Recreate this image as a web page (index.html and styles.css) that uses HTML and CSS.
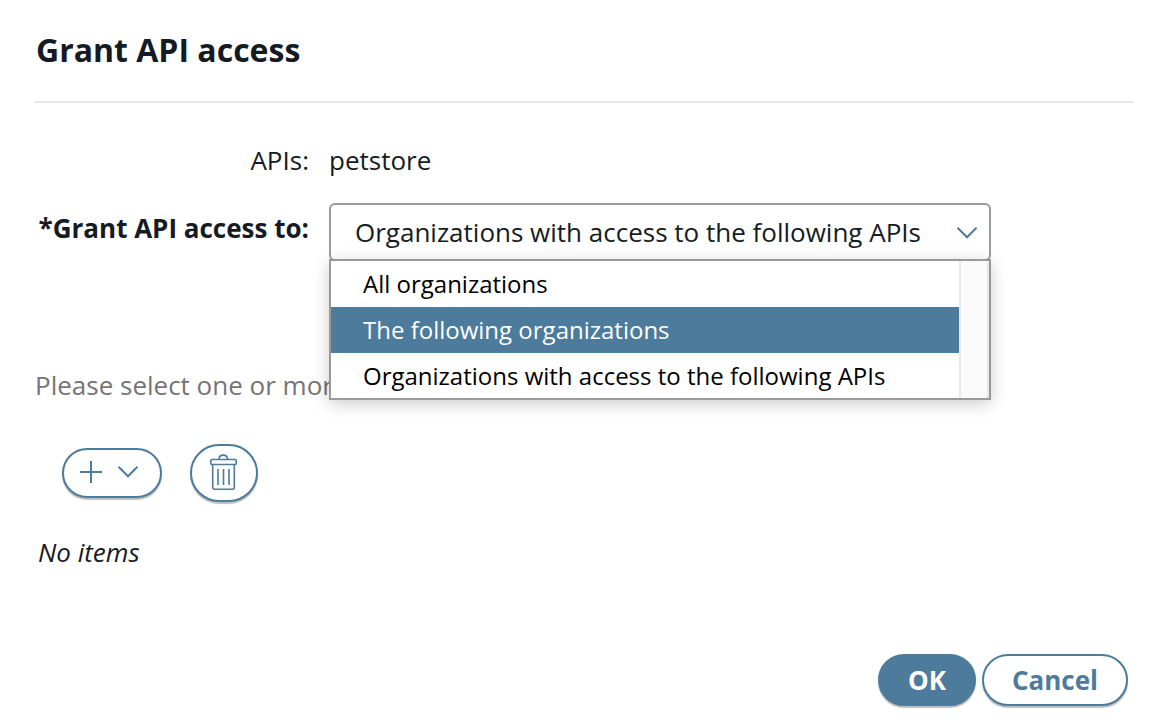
FILE: index.html
```html
<!DOCTYPE html>
<html lang="en">
<head>
<meta charset="utf-8">
<title>Grant API access</title>
<link rel="stylesheet" href="styles.css">
</head>
<body>
<main class="dialog">
  <header class="dialog-header">
    <h1 class="dialog-title">Grant API access</h1>
  </header>
  <form class="dialog-form">
    <div class="field">
      <span class="field-label">APIs:</span>
      <span class="field-value">petstore</span>
    </div>
    <div class="field field-access">
      <label class="field-label field-label-required" for="access">*Grant API access to:</label>
      <div class="select">
        <select class="select-control" id="access">
          <option>Organizations with access to the following APIs</option>
        </select>
        <svg class="select-arrow" width="22" height="14" viewBox="0 0 22 14" aria-hidden="true"><path d="M1.5 1.8 11 11.3 20.5 1.8"/></svg>
        <div class="menu">
          <ul class="menu-list" role="listbox" aria-label="Grant API access to">
            <li class="menu-item" role="option">All organizations</li>
            <li class="menu-item menu-item-active" role="option" aria-selected="true">The following organizations</li>
            <li class="menu-item" role="option">Organizations with access to the following APIs</li>
          </ul>
          <div class="menu-track"></div>
        </div>
      </div>
    </div>
    <p class="hint">Please select one or more</p>
    <div class="toolbar">
      <button class="tool tool-add" type="button" aria-label="Add">
        <svg width="22" height="22" viewBox="0 0 22 22"><path d="M11 0V22M0 11H22"/></svg>
        <svg width="22" height="14" viewBox="0 0 22 14"><path d="M1.5 1.8 11 11.3 20.5 1.8"/></svg>
      </button>
      <button class="tool tool-delete" type="button" aria-label="Delete">
        <svg class="trash" width="28" height="38" viewBox="0 0 28 38"><path d="M9 5.500C9-.3 17.500-.3 17.500 5.500"/><rect x=".8" y="5.500" width="25.400" height="5" rx="1"/><path d="M2.700 10.500V33.200a2 2 0 0 0 2 2h17.600a2 2 0 0 0 2-2V10.500M8 15v16M13.500 15v16M19 15v16"/></svg>
      </button>
    </div>
    <p class="empty">No items</p>
    <footer class="actions">
      <button class="button button-primary" type="submit">OK</button>
      <button class="button" type="button">Cancel</button>
    </footer>
  </form>
</main>
</body>
</html>
```
FILE: styles.css
```css
* {
  box-sizing: border-box;
}

body {
  margin: 0;
  background: #fff;
  color: #151b23;
  font: 26px/36px "Open Sans", sans-serif;
}

.dialog {
  padding: 28px 37px 14px 35px;
}

.dialog-header {
  padding: 0 1px 29px;
  border-bottom: 2px solid #e8e8e8;
}

.dialog-title {
  margin: 0;
  font-size: 32px;
  line-height: 44px;
  font-weight: 700;
}

.dialog-form {
  padding-top: 39px;
}

.field {
  display: grid;
  grid-template-columns: 274px minmax(0, 662px);
  column-gap: 20px;
}

.field-label {
  text-align: right;
}

.field-label-required {
  padding-top: 7px;
  font-weight: 700;
}

.field-access {
  margin-top: 25px;
}

.select {
  position: relative;
}

.select-control {
  display: block;
  appearance: none;
  width: 100%;
  height: 58px;
  padding: 0 44px 0 24px;
  border: 2px solid #999;
  border-radius: 6px;
  background: #fff;
  color: inherit;
  font: inherit;
}

.select-arrow {
  position: absolute;
  top: 23px;
  right: 13px;
  pointer-events: none;
}

svg {
  fill: none;
  stroke: #4d7b9c;
  stroke-width: 2;
}

.menu {
  position: absolute;
  z-index: 1;
  top: 56px;
  left: 0;
  right: 0;
  display: flex;
  height: 141px;
  border: 2px solid #999;
  background: #fff;
  box-shadow: 0 4px 16px rgba(0, 0, 0, 0.2);
}

.menu-list {
  flex: 1;
  margin: 0;
  padding: 0;
  list-style: none;
  color: #000;
  font-size: 24px;
  line-height: 46px;
}

.menu-item {
  padding: 0 32px;
}

.menu-item-active {
  background: #4d7b9c;
  color: #fff;
}

.menu-track {
  width: 30px;
  border: solid #e8e8e8;
  border-width: 0 2px;
  background: #fafafa;
}

.hint {
  margin: 106px 0 0;
  color: #757575;
}

.toolbar {
  display: flex;
  align-items: center;
  gap: 28px;
  margin: 41px 0 0 27px;
}

.tool {
  display: flex;
  align-items: center;
  justify-content: center;
  padding: 0;
  border: 2px solid #4d7b9c;
  border-radius: 29px;
  background: #fff;
  box-shadow: 0 2px 1px rgba(0, 0, 0, 0.25);
}

.tool-add {
  gap: 15px;
  width: 100px;
  height: 50px;
  padding: 0 6px 2px 0;
}

.tool-delete {
  width: 68px;
  height: 58px;
}

.trash {
  stroke-width: 1.6;
}

.empty {
  margin: 32px 0 0 3px;
  font-style: italic;
}

.actions {
  display: flex;
  justify-content: flex-end;
  gap: 6px;
  margin: 84px 5px 0 0;
}

.button {
  height: 52px;
  padding: 0 28px;
  border: 2px solid #4d7b9c;
  border-radius: 26px;
  background: #fff;
  box-shadow: 0 2px 1px rgba(0, 0, 0, 0.25);
  color: #4d7b9c;
  font: inherit;
  font-weight: 700;
}

.button-primary {
  background: #4d7b9c;
  color: #fff;
}
```
